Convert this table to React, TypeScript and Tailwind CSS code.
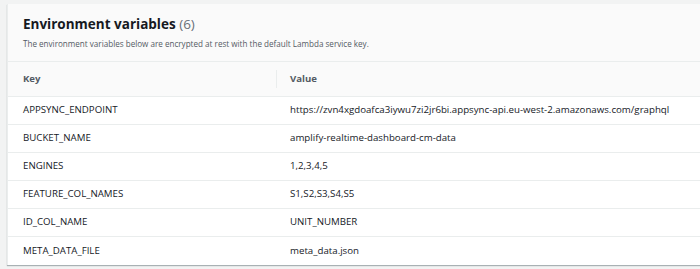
const ROWS: [string, string][] = [
  ["APPSYNC_ENDPOINT", "https://zvn4xgdoafca3iywu7zi2jr6bi.appsync-api.eu-west-2.amazonaws.com/graphql"],
  ["BUCKET_NAME", "amplify-realtime-dashboard-cm-data"],
  ["ENGINES", "1,2,3,4,5"],
  ["FEATURE_COL_NAMES", "S1,S2,S3,S4,S5"],
  ["ID_COL_NAME", "UNIT_NUMBER"],
  ["META_DATA_FILE", "meta_data.json"],
];

export default function App() {
  return (
    <div
      className="h-[269px] w-[700px] overflow-hidden bg-[#f2f3f3] pl-[7px] pt-[4px] text-[#16191f]"
      style={{ fontFamily: '"Open Sans", "Noto Sans", sans-serif' }}
    >
      <div className="w-[700px] border-l border-[#eaeded] bg-white shadow-[0_1px_1px_0_rgba(0,28,36,0.3)]">
        <div className="h-[58px] border-b border-[#eaeded] bg-[#fafafa] pl-[15px] pt-[10px]">
          <h2 className="text-[13.5px] font-bold leading-[20px]">
            Environment variables <span className="font-normal text-[#687078]">(6)</span>
          </h2>
          <p className="mt-[4px] text-[8.1px] leading-[12px] text-[#545b64]">
            The environment variables below are encrypted at rest with the default Lambda service key.
          </p>
        </div>
        <div className="grid h-[35px] grid-cols-[269px_1fr] items-center border-b border-[#eaeded] bg-[#fafafa] text-[9.6px] font-bold text-[#545b64]">
          <div className="flex h-[18px] items-center border-r border-[#eaeded] pl-[15px]">Key</div>
          <div className="pl-[13px]">Value</div>
        </div>
        {ROWS.map(([k, v], i) => (
          <div
            key={k}
            className={`grid h-[28px] grid-cols-[269px_1fr] items-center text-[9.7px] ${i < ROWS.length - 1 ? "border-b border-[#eaeded]" : ""}`}
          >
            <div className="pl-[15px]">{k}</div>
            <div className="whitespace-nowrap pl-[13px]">{v}</div>
          </div>
        ))}
      </div>
    </div>
  );
}
